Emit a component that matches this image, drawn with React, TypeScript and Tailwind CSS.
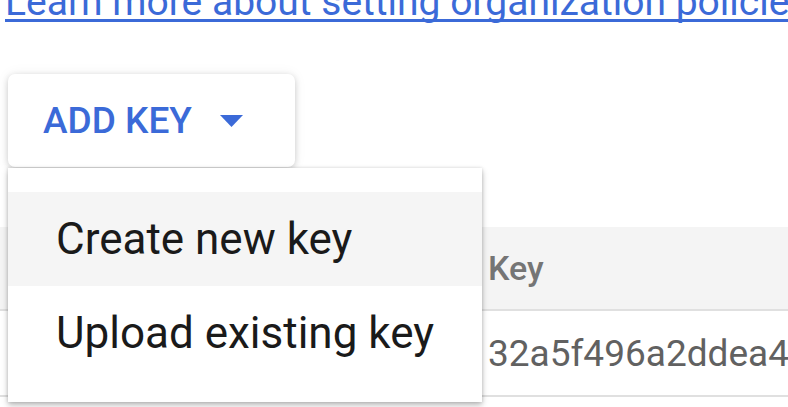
import React from "react";

export default function App() {
  return (
    <div className="relative w-[788px] h-[407px] overflow-hidden bg-white font-['Roboto',sans-serif]">
      <div className="-mt-[16px] ml-[5px] h-[38px] border-b-[3px] border-[#3b6ad8] whitespace-nowrap text-[39px] leading-[36px] text-[#3b6ad8]">
        Learn more about setting organization policies
      </div>

      <div className="relative ml-[8px] mt-[52px] w-[287px]">
        <button className="flex h-[93px] w-[287px] items-center rounded-[7px] bg-white pl-[35px] shadow-[0_2px_6px_rgba(0,0,0,0.18),0_0_14px_rgba(0,0,0,0.06)]">
          <span className="text-[37px] leading-none font-medium text-[#3b6ad8]">ADD KEY</span>
          <svg className="ml-[28px]" width="23" height="12" viewBox="0 0 23 12">
            <path d="M0 0 L23 0 L11.5 12 Z" fill="#3b6ad8" />
          </svg>
        </button>

        <div className="absolute left-0 top-[94px] z-10 w-[474px] bg-white pt-[24px] pb-[22px] shadow-[0_3px_6px_rgba(0,0,0,0.28),0_0_3px_rgba(0,0,0,0.12)]">
          <div className="flex h-[94px] items-center bg-[#f5f5f5] pl-[48px] text-[44px] leading-none text-[#1a1a1a]">
            Create new key
          </div>
          <div className="flex h-[94px] items-center pl-[48px] text-[44px] leading-none text-[#1a1a1a]">
            Upload existing key
          </div>
        </div>
      </div>

      <div className="mt-[60px] w-[788px]">
        <div className="flex h-[82px] items-center bg-[#f4f4f4]">
          <div className="w-[482px] shrink-0" />
          <div className="pl-[6px] text-[34px] leading-none font-medium text-[#757575]">Key</div>
        </div>
        <div className="h-[2px] bg-[#e0e0e0]" />
        <div className="flex h-[84px] items-center">
          <div className="w-[482px] shrink-0" />
          <div className="whitespace-nowrap pl-[6px] text-[37px] leading-none text-[#616161]">32a5f496a2ddea4b8</div>
        </div>
        <div className="h-[2px] bg-[#e0e0e0]" />
      </div>
    </div>
  );
}
